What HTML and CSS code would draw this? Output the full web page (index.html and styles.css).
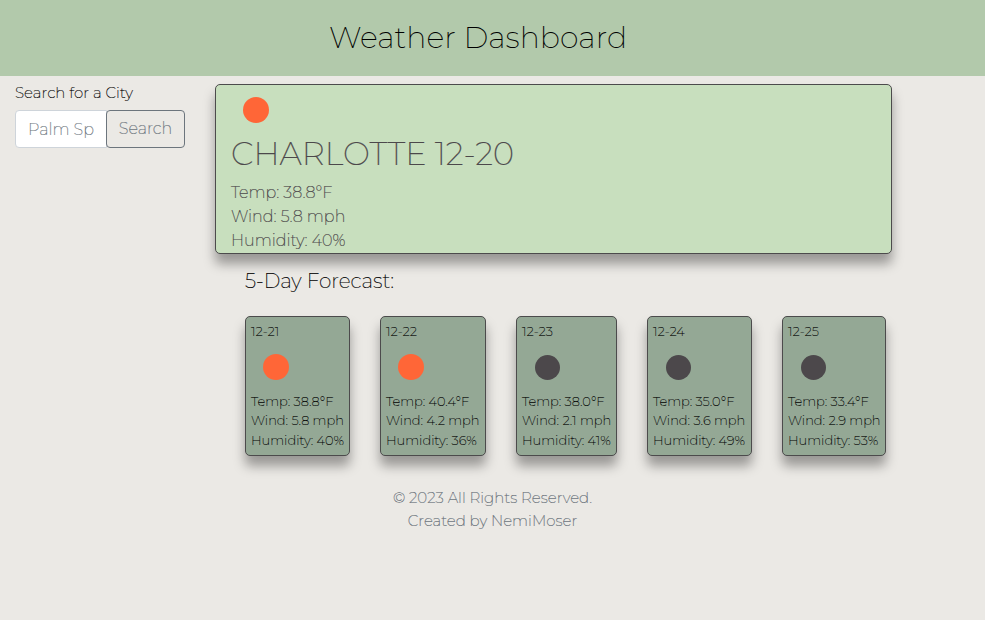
FILE: index.html
```html
<!DOCTYPE html>
<html lang="en">
<head>
<meta charset="utf-8">
<title>Weather Dashboard</title>
<link rel="stylesheet" href="styles.css">
</head>
<body>
<header class="header"><h1>Weather Dashboard</h1></header>
<div class="layout">
  <aside class="search">
    <label class="label" for="city"><span>Search for a City</span></label>
    <form class="group">
      <input id="city" class="input" type="text" placeholder="Palm Springs">
      <button class="button" type="button">Search</button>
    </form>
  </aside>
  <main class="main">
    <section class="today">
      <div class="icon"></div>
      <h2><span>CHARLOTTE 12-20</span></h2>
      <p>Temp: 38.8°F</p>
      <p>Wind: 5.8 mph</p>
      <p>Humidity: 40%</p>
    </section>
    <h3 class="heading"><span>5-Day Forecast:</span></h3>
    <section class="forecast">
      <article class="card w105"><p>12-21</p><div class="icon"></div><p>Temp: 38.8°F</p><p>Wind: 5.8 mph</p><p>Humidity: 40%</p></article>
      <article class="card w106"><p>12-22</p><div class="icon"></div><p>Temp: 40.4°F</p><p>Wind: 4.2 mph</p><p>Humidity: 36%</p></article>
      <article class="card w101"><p>12-23</p><div class="icon cloudy"></div><p>Temp: 38.0°F</p><p>Wind: 2.1 mph</p><p>Humidity: 41%</p></article>
      <article class="card w105"><p>12-24</p><div class="icon cloudy"></div><p>Temp: 35.0°F</p><p>Wind: 3.6 mph</p><p>Humidity: 49%</p></article>
      <article class="card w104"><p>12-25</p><div class="icon cloudy"></div><p>Temp: 33.4°F</p><p>Wind: 2.9 mph</p><p>Humidity: 53%</p></article>
    </section>
  </main>
</div>
<footer class="footer"><p>© 2023 All Rights Reserved.</p><p>Created by NemiMoser</p></footer>
</body>
</html>
```
FILE: styles.css
```css
* { box-sizing: border-box; }
body { margin: 0; min-height: 620px; background: #ebe9e5; color: #000; font: 250 16px/24px Montserrat, Inter, sans-serif; }
h1, h2, h3, p { margin: 0; font-weight: 250; }
.header { height: 76px; background: #b2c9ab; padding: 18px 0 0 329px; }
h1 { font-size: 30px; line-height: 40px; white-space: nowrap; }
.layout { display: flex; }
.search { width: 215px; padding: 5px 30px 0 15px; }
.label { display: block; height: 24px; font-size: 15px; letter-spacing: .05px; margin-bottom: 5px; -webkit-text-stroke: .15px; }
.group { display: flex; width: 170px; height: 38px; margin: 0; }
.input { width: 92px; min-width: 0; padding: 7px 12px 5px; border: 1px solid #ced4da; border-radius: 4px 0 0 4px; background: #fff; font: 250 16px/24px Montserrat, Inter, sans-serif; -webkit-text-stroke: .15px; }
.input::placeholder { color: #6c757d; opacity: 1; }
.button { width: 79px; margin-left: -1px; padding: 0; border: 1px solid #6c757d; border-radius: 4px; background: transparent; color: #6c757d; font: 250 16px/24px Montserrat, Inter, sans-serif; -webkit-text-stroke: .2px; }
.main { width: 677px; padding-top: 8px; }
.today { height: 170px; padding-left: 15px; border: 1px solid #4c4b4c; border-radius: 5px; background: #c8dfbe; color: #4c484b; box-shadow: 0 10px 12px rgba(0,0,0,.35); -webkit-text-stroke: .2px; }
.icon { width: 26px; height: 26px; border-radius: 50%; background: #ff6637; margin-left: 12px; }
.today .icon { margin-top: 12px; }
.today h2 { margin: 11px 0 8px; font-size: 32px; line-height: 39px; font-weight: 200; white-space: nowrap; }
.heading { margin: 15px 0 0 30px; font-size: 20px; line-height: 24px; -webkit-text-stroke: .15px; }
.forecast { display: flex; gap: 30px; margin: 23px 0 0 30px; }
.card { height: 140px; padding: 5px; border: 1px solid #4c4b4c; border-radius: 5px; background: #94a895; font-size: 13px; line-height: 19.5px; white-space: nowrap; box-shadow: 0 10px 12px rgba(0,0,0,.35); -webkit-text-stroke: .1px; }
.card .icon { margin-top: 12.5px; margin-bottom: 11.5px; }
.card .cloudy { width: 25px; height: 25px; margin: 13px 0 12px 13px; background: #4c484b; }
.w101 { width: 101px; }
.w104 { width: 104px; }
.w105 { width: 105px; }
.w106 { width: 106px; }
.footer { margin-top: 30px; text-align: center; color: #6c757d; font-size: 15px; line-height: 23px; -webkit-text-stroke: .2px; }
```
